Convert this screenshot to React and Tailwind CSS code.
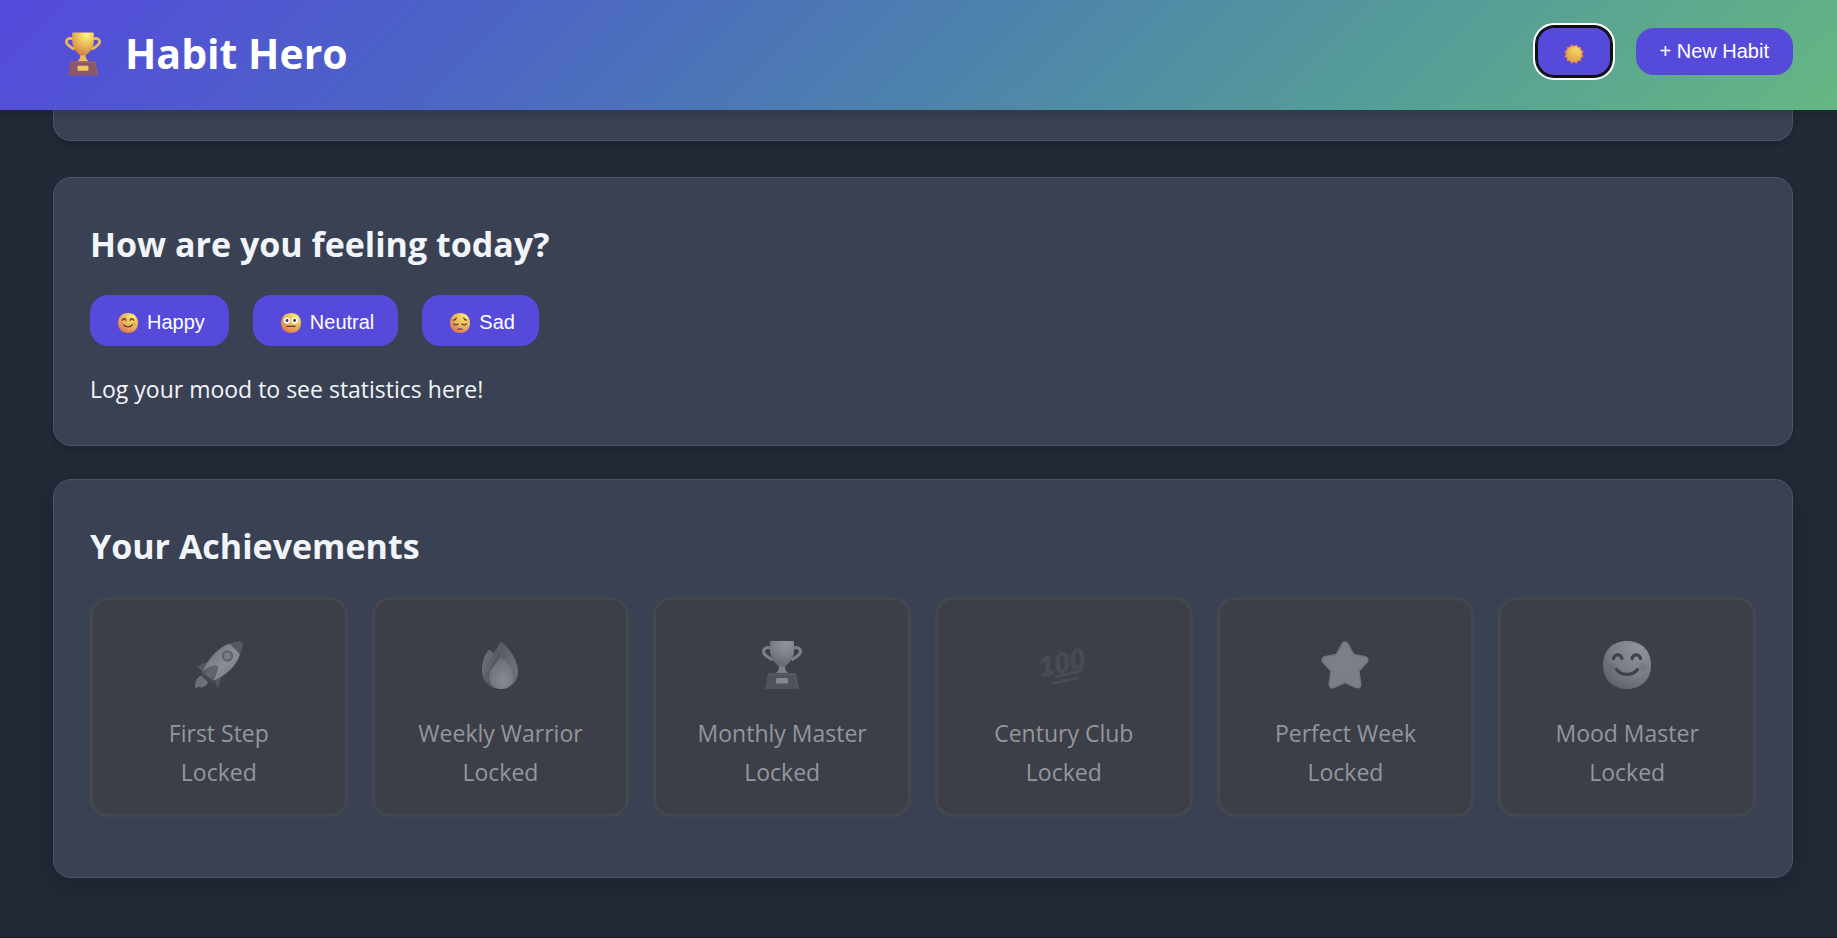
const achievements = [
  { name: 'First Step', Icon: RocketIcon },
  { name: 'Weekly Warrior', Icon: FlameIcon },
  { name: 'Monthly Master', Icon: MutedTrophyIcon },
  { name: 'Century Club', Icon: HundredIcon },
  { name: 'Perfect Week', Icon: StarIcon },
  { name: 'Mood Master', Icon: MutedSmileIcon },
];

const moods = [
  { name: 'Happy', Icon: HappyIcon },
  { name: 'Neutral', Icon: NeutralIcon },
  { name: 'Sad', Icon: SadIcon },
];

const faceShape = 'M24 0C38.500 0 48 9.500 48 24S38.500 48 24 48 0 38.500 0 24 9.500 0 24 0Z';

function Trophy({ id, className, light, mid, dark, base, baseEdge, plaque }) {
  return (
    <svg viewBox="0 0 40 48" className={className} aria-hidden="true">
      <defs>
        <radialGradient id={id} cx="0.65" cy="0.1" r="0.95">
          <stop offset="0" stopColor={light} />
          <stop offset="0.5" stopColor={mid} />
          <stop offset="1" stopColor={dark} />
        </radialGradient>
      </defs>
      <path
        d="M9 7.2C4.5 5.5 1.5 7.5 1.5 10.5c0 4 5 5.500 9 8.500M31 7.200c4.500-1.700 7.500.300 7.500 3.300 0 4-5 5.500-9 8.500"
        fill="none"
        stroke={mid}
        strokeWidth="3"
      />
      <path d="M17 23h6v4c.5 2.500 2 4.500 4.500 6h-15c2.500-1.500 4-3.500 4.500-6z" fill={mid} />
      <path d="M9 0h22c.6 0 1 .4 1 1v8.500C32 18 26 23 23 25.500h-6C14 23 8 18 8 9.500V1c0-.6.4-1 1-1z" fill={`url(#${id})`} />
      <path d="M7.500 32h25c.8 0 1.300.4 1.500 1.100L37.200 48H2.800L6 33.100c.2-.7.7-1.100 1.500-1.100z" fill={base} />
      <path d="M6 33.500h28M36 47 33 33" fill="none" stroke={baseEdge} strokeWidth="1" />
      <rect x="14" y="37" width="12" height="5.500" rx="1" fill={plaque} />
    </svg>
  );
}

function TrophyIcon() {
  return (
    <Trophy
      id="trophy-gold"
      className="w-9 h-11"
      light="#fff583"
      mid="#ecb957"
      dark="#cd7a4b"
      base="#8b576b"
      baseEdge="#a0655f"
      plaque="#f4c763"
    />
  );
}

function MutedTrophyIcon() {
  return (
    <Trophy
      id="trophy-muted"
      className="w-10 h-12"
      light="#91949b"
      mid="#7d8087"
      dark="#62656c"
      base="#4f5259"
      baseEdge="#5a5d64"
      plaque="#85888f"
    />
  );
}

function Face({ id, light, mid, dark, children, className }) {
  return (
    <svg viewBox="0 0 48 48" className={className} aria-hidden="true">
      <defs>
        <radialGradient id={id} cx="0.75" cy="0.15" r="0.95">
          <stop offset="0" stopColor={light} />
          <stop offset="0.6" stopColor={mid} />
          <stop offset="1" stopColor={dark} />
        </radialGradient>
      </defs>
      <path d={faceShape} fill={`url(#${id})`} />
      {children}
    </svg>
  );
}

function SmileFeatures({ color, cheek }) {
  return (
    <>
      <ellipse cx="8" cy="26" rx="4" ry="4" fill={cheek} opacity="0.4" />
      <ellipse cx="40" cy="26" rx="4" ry="4" fill={cheek} opacity="0.4" />
      <path
        d="M10.500 17.500c1.500-5 7-5 8.500 0M29 17.500c1.500-5 7-5 8.500 0M13.500 28.500c5 6.500 16 6.500 21 0"
        fill="none"
        stroke={color}
        strokeWidth="3.200"
        strokeLinecap="round"
      />
    </>
  );
}

function HappyIcon() {
  return (
    <Face id="face-happy" className="w-5 h-5" light="#fbea74" mid="#eab257" dark="#db705c">
      <SmileFeatures color="#5b3b45" cheek="#f0845c" />
    </Face>
  );
}

function MutedSmileIcon() {
  return (
    <Face id="face-muted" className="w-12 h-12" light="#90939a" mid="#7a7d84" dark="#5e6168">
      <SmileFeatures color="#3f424a" cheek="#686b72" />
    </Face>
  );
}

function NeutralIcon() {
  return (
    <Face id="face-neutral" className="w-5 h-5" light="#fbea74" mid="#eab257" dark="#db705c">
      <circle cx="14" cy="18" r="7.500" fill="#fff" />
      <circle cx="33" cy="18" r="7.500" fill="#fff" />
      <circle cx="14.500" cy="18" r="3.500" fill="#40314a" />
      <circle cx="32.500" cy="18" r="3.500" fill="#40314a" />
      <path d="M14 32h20" stroke="#5b3b45" strokeWidth="3.200" strokeLinecap="round" />
    </Face>
  );
}

function SadIcon() {
  return (
    <Face id="face-sad" className="w-5 h-5" light="#fbea74" mid="#eab257" dark="#db705c">
      <path
        d="M8 17c4 0 6-2 7-5M40 17c-4 0-6-2-7-5M9 26c2 3 8 3 10 0M29 26c2 3 8 3 10 0M19 39c3-1 7-1 10 0"
        fill="none"
        stroke="#5b3b45"
        strokeWidth="3"
        strokeLinecap="round"
      />
    </Face>
  );
}

function SunIcon() {
  return (
    <svg viewBox="3 3 34 34" className="w-5 h-5" aria-hidden="true">
      <defs>
        <radialGradient id="sun-core" cx="0.7" cy="0.2" r="0.9">
          <stop offset="0" stopColor="#f8d961" />
          <stop offset="1" stopColor="#dca04b" />
        </radialGradient>
      </defs>
      <g fill="#e1874b">
        <rect x="8" y="8" width="24" height="24" rx="1" />
        <rect x="8" y="8" width="24" height="24" rx="1" transform="rotate(30 20 20)" />
        <rect x="8" y="8" width="24" height="24" rx="1" transform="rotate(60 20 20)" />
      </g>
      <circle cx="20" cy="20" r="13" fill="url(#sun-core)" />
    </svg>
  );
}

function RocketIcon() {
  return (
    <svg viewBox="0 0 48 48" className="w-12 h-12" aria-hidden="true">
      <defs>
        <linearGradient id="rocket-body" x1="0.2" y1="0.2" x2="0.8" y2="0.8">
          <stop offset="0" stopColor="#73767d" />
          <stop offset="0.6" stopColor="#8a8d94" />
          <stop offset="1" stopColor="#7c7f86" />
        </linearGradient>
        <linearGradient id="rocket-fin" x1="0" y1="0" x2="1" y2="1">
          <stop offset="0" stopColor="#4a4d54" />
          <stop offset="0.5" stopColor="#63666d" />
          <stop offset="1" stopColor="#4c4f56" />
        </linearGradient>
      </defs>
      <path d="M6 34.500C1 37 0 41 0 46.500c1.500.5 3 0 4.500-1 1 1.500 2.500 1 4 .5 2.500-1 4-3 4.500-5z" fill="#6c6f76" />
      <path d="M1 25.500 11 21.500 15 21 8 31zM19 38l3 8c.5 1 1.500.5 1.700-.3L27 34z" fill="#52555c" />
      <path d="M35 2.500C24 6 14 16 7.500 30.500L19 39.500C33 33 42 24 45 13z" fill="url(#rocket-body)" />
      <path d="M35 2.500C39 .5 43 0 46.500.8c1.300.3 1.500 1.200 1.400 2.200-.3 3.500-1.200 6.500-2.900 10z" fill="#565960" />
      <path d="M6.500 31.500C11 27 17 24 22 24.500c1 .2 1.500 1 1.200 2C22 32 20 36 17.500 41z" fill="url(#rocket-fin)" />
      <path d="m7 33 11 9" stroke="#45484f" strokeWidth="3" />
      <circle cx="32.500" cy="15" r="4.700" fill="#777a81" stroke="#5c5f66" strokeWidth="1.800" />
    </svg>
  );
}

function FlameIcon() {
  return (
    <svg viewBox="0 0 36 48" className="w-9 h-12" aria-hidden="true">
      <defs>
        <linearGradient id="flame-outer" x1="0.1" y1="0.1" x2="0.9" y2="0.4">
          <stop offset="0.1" stopColor="#6a6d74" />
          <stop offset="0.4" stopColor="#54575e" />
          <stop offset="1" stopColor="#6b6e75" />
        </linearGradient>
        <radialGradient id="flame-inner" cx="0.6" cy="0.75" r="0.7">
          <stop offset="0" stopColor="#878a91" />
          <stop offset="1" stopColor="#6c6f76" />
        </radialGradient>
      </defs>
      <path
        d="M18.500 0C28 8 36 19 36 31c0 10-8 17-18 17S0 41 0 29C0 21 3 13 6.500 9.500c1-1 2-.5 2.700.3L11.500 12C14 9 16 5 18.500 0z"
        fill="url(#flame-outer)"
      />
      <path d="M2 27c2-5 5-9 9-14M5 31C7 22 16 16 18 5" fill="none" stroke="#6e7178" strokeWidth="1.200" opacity="0.600" />
      <path d="M19 16c7 5 12 13 12 21 0 7-5 11-12 11S7 43 7 36c0-8 7-13 12-20z" fill="url(#flame-inner)" />
    </svg>
  );
}

function HundredIcon() {
  return (
    <svg viewBox="0 0 48 48" className="w-12 h-12 overflow-visible" aria-hidden="true">
      <text
        x="1"
        y="36"
        transform="rotate(-12 1 36)"
        className="font-['Liberation_Sans',Arial,sans-serif] text-[28px] font-bold italic"
        fill="#484b53"
        stroke="#484b53"
        strokeWidth="1"
      >
        100
      </text>
      <path d="M16 35.500 41 30M12 42.500 37 37" stroke="#484b53" strokeWidth="3" strokeLinecap="round" />
    </svg>
  );
}

function StarIcon() {
  return (
    <svg viewBox="0 0 48 48" className="w-12 h-12" aria-hidden="true">
      <g strokeLinejoin="round">
        <path
          d="M24 4.500 30.500 16.500 43.500 19 34.500 29 36.500 43.500 24 38 11.500 43.500 13.500 29 4.500 19 17.500 16.500z"
          fill="#73767d"
          stroke="#73767d"
          strokeWidth="8"
        />
        <path
          d="M24 4.500 30.500 16.500 43.500 19 34.500 29 36.500 43.500 24 38 11.500 43.500 13.500 29 4.500 19 17.500 16.500z"
          fill="#7c7f86"
          stroke="#7c7f86"
          strokeWidth="5"
        />
      </g>
    </svg>
  );
}

export default function App() {
  return (
    <div className="min-h-screen bg-[#222937] border-b border-[#16181f] font-['Open_Sans','Noto_Sans',sans-serif] text-[23px] leading-[39px] text-[#f1f5f9]">
      <header className="sticky top-0 z-10 flex items-center justify-between h-[110px] pb-[7px] pl-[53px] pr-11 bg-[linear-gradient(135deg,#554adc,#4c63c6_25%,#4c80ae_50%,#559c98_75%,#66b783)] shadow-[0_4px_8px_rgba(0,0,0,0.12)]">
        <h1 className="flex items-center gap-6 pt-1 pl-3 text-[41px] font-bold text-white">
          <TrophyIcon />
          Habit Hero
        </h1>
        <div className="flex items-center gap-6 font-['Liberation_Sans',Arial,sans-serif] text-xl leading-[23px]">
          <button
            type="button"
            aria-label="Toggle theme"
            className="flex items-center justify-center w-[76px] h-[51px] pt-1 rounded-[18px] bg-[#564adb] outline-2 outline-white outline-offset-1 ring-1 ring-[#101010] inset-ring-2 inset-ring-[#101010]"
          >
            <SunIcon />
          </button>
          <button type="button" className="px-6 py-3 rounded-[18px] bg-[#564adb] text-white">
            + New Habit
          </button>
        </div>
      </header>

      <main className="pl-[53px] pr-11 pb-[59px]">
        <section className="h-[31px] rounded-b-[18px] border border-t-0 border-[#4b5563] bg-[#394152] shadow-[0_4px_6px_rgba(0,0,0,0.15)]" />

        <section className="mt-9 p-9 rounded-[18px] border border-[#4b5563] bg-[#394152] shadow-[0_4px_6px_rgba(0,0,0,0.15)]">
          <h2 className="pt-0.5 pb-[22px] text-[34px] leading-[57px] font-bold">How are you feeling today?</h2>
          <div className="flex flex-wrap gap-6 font-['Liberation_Sans',Arial,sans-serif] text-xl leading-[27px]">
            {moods.map(({ name, Icon }) => (
              <button
                key={name}
                type="button"
                className="flex items-center gap-[9px] pl-7 pr-6 pt-[14px] pb-[10px] rounded-[18px] bg-[#564adb] text-white"
              >
                <Icon />
                {name}
              </button>
            ))}
          </div>
          <p className="mt-6">Log your mood to see statistics here!</p>
        </section>

        <section className="mt-[33px] px-9 pt-9 pb-[60px] rounded-[18px] border border-[#4b5563] bg-[#394152] shadow-[0_8px_24px_rgba(0,0,0,0.15)]">
          <h2 className="pt-0.5 pb-[22px] text-[34px] leading-[57px] font-bold">Your Achievements</h2>
          <div className="grid grid-cols-6 gap-6">
            {achievements.map(({ name, Icon }) => (
              <div
                key={name}
                className="flex flex-col items-center px-3 pt-[41px] pb-[22px] rounded-[18px] border-3 border-[#44474d] bg-[#3c3f47] text-center text-[#94969d]"
              >
                <Icon />
                <p className="mt-[25px]">{name}</p>
                <p>Locked</p>
              </div>
            ))}
          </div>
        </section>
      </main>
    </div>
  );
}
